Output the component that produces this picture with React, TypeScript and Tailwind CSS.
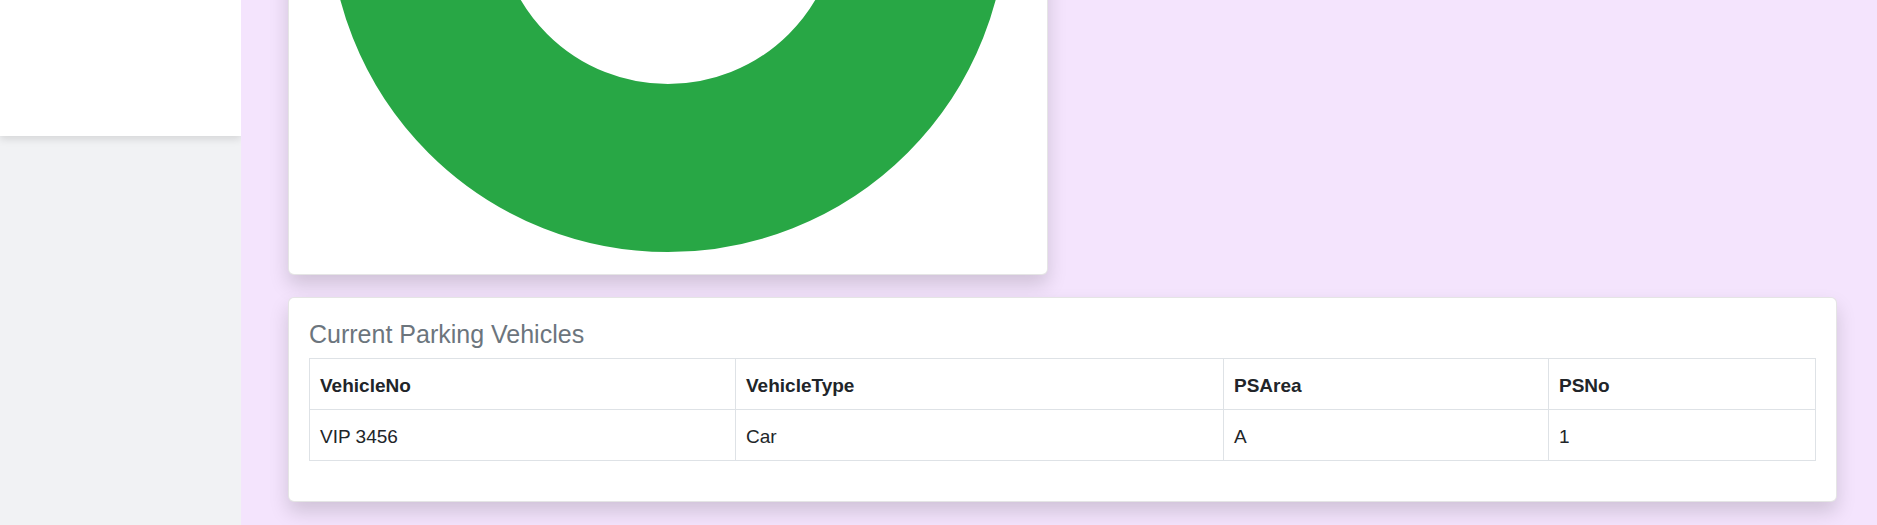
import React from "react";

const rows = [{ no: "VIP 3456", type: "Car", area: "A", ps: "1" }];

const App = () => {
  return (
    <div className="flex h-[525px] w-full overflow-hidden font-['Liberation_Sans',Arial,sans-serif] text-[#212529]">
      {/* SIDEBAR */}
      <div className="flex w-[241px] shrink-0 flex-col bg-[#f1f2f4]">
        <div className="h-[136px] bg-white shadow-[0_3px_8px_rgba(0,0,0,0.12)]" />
      </div>

      {/* MAIN */}
      <div className="flex flex-1 flex-col justify-end gap-[22px] bg-[#f4e4fd] pb-[23px] pl-[47px] pr-[40px]">
        {/* CHART CARD */}
        <div className="flex w-[760px] shrink-0 justify-center rounded-[6px] border border-black/10 bg-white pb-[22px] pt-[20px] shadow-[0_10px_19px_rgba(0,0,0,0.15)]">
          <svg width="678" height="678" viewBox="0 0 678 678">
            <circle cx="339" cy="339" r="255" fill="none" stroke="#28a745" strokeWidth="168" />
          </svg>
        </div>

        {/* TABLE CARD */}
        <div className="shrink-0 rounded-[6px] border border-black/10 bg-white px-[20px] pb-[40px] pt-[21px] shadow-[0_10px_19px_rgba(0,0,0,0.15)]">
          <h5 className="mb-[9px] text-[25px] leading-[30px] text-[#6c757d]">Current Parking Vehicles</h5>
          <table className="w-full table-fixed border-collapse text-[19px]">
            <colgroup>
              <col className="w-[426px]" />
              <col className="w-[488px]" />
              <col className="w-[325px]" />
              <col />
            </colgroup>
            <thead>
              <tr>
                {["VehicleNo", "VehicleType", "PSArea", "PSNo"].map((h) => (
                  <th key={h} className="border border-[#dee2e6] px-[10px] pb-[9px] pt-[12px] text-left align-top font-bold leading-[29px]">
                    {h}
                  </th>
                ))}
              </tr>
            </thead>
            <tbody>
              {rows.map((r) => (
                <tr key={r.no}>
                  {[r.no, r.type, r.area, r.ps].map((c, i) => (
                    <td key={i} className="border border-[#dee2e6] px-[10px] pb-[9px] pt-[12px] align-top leading-[29px]">
                      {c}
                    </td>
                  ))}
                </tr>
              ))}
            </tbody>
          </table>
        </div>
      </div>
    </div>
  );
};

export default App;
